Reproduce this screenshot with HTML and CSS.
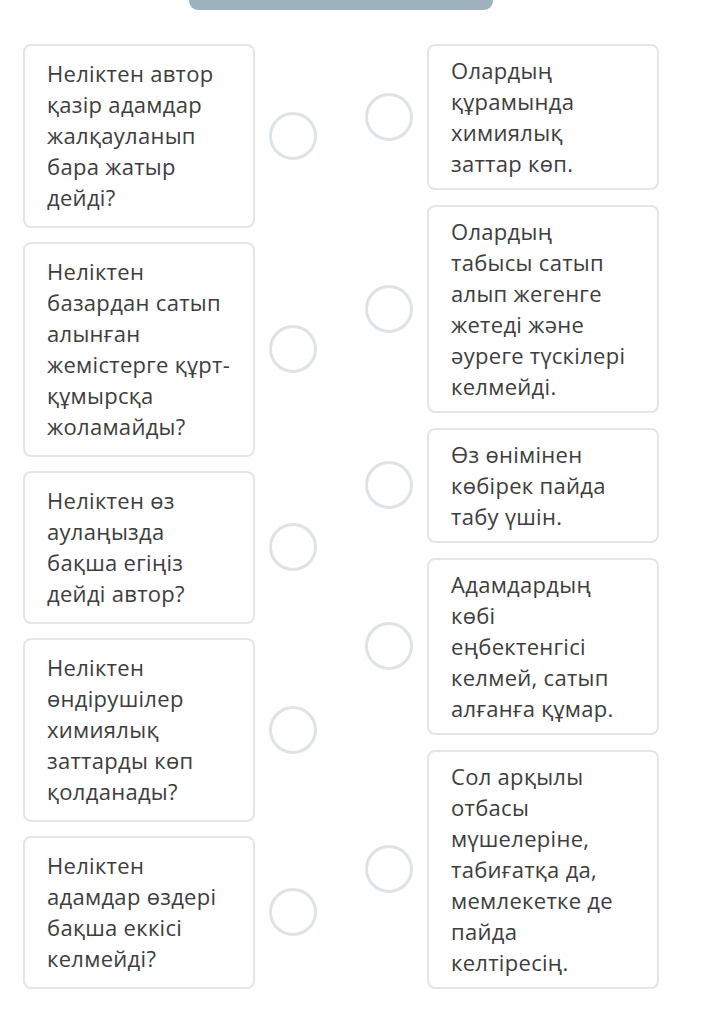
FILE: index.html
```html
<!DOCTYPE html>
<html lang="kk">
<head>
  <meta charset="UTF-8">
  <meta name="viewport" content="width=device-width, initial-scale=1.0">
  <title>Сәйкестендіру</title>
  <link rel="stylesheet" href="styles.css">
</head>
<body>
  <div class="topbar"></div>

  <div class="board">
    <div class="column left">
      <div class="row">
        <div class="card">Неліктен автор қазір адамдар жалқауланып бара жатыр дейді?</div>
        <span class="dot"></span>
      </div>
      <div class="row">
        <div class="card">Неліктен базардан сатып алынған жемістерге құрт-құмырсқа жоламайды?</div>
        <span class="dot"></span>
      </div>
      <div class="row">
        <div class="card">Неліктен өз аулаңызда бақша егіңіз дейді автор?</div>
        <span class="dot"></span>
      </div>
      <div class="row">
        <div class="card">Неліктен өндірушілер химиялық заттарды көп қолданады?</div>
        <span class="dot"></span>
      </div>
      <div class="row">
        <div class="card">Неліктен адамдар өздері бақша еккісі келмейді?</div>
        <span class="dot"></span>
      </div>
    </div>

    <div class="column right">
      <div class="row">
        <span class="dot"></span>
        <div class="card">Олардың құрамында химиялық заттар көп.</div>
      </div>
      <div class="row">
        <span class="dot"></span>
        <div class="card">Олардың табысы сатып алып жегенге жетеді және әуреге түскілері келмейді.</div>
      </div>
      <div class="row">
        <span class="dot"></span>
        <div class="card">Өз өнімінен көбірек пайда табу үшін.</div>
      </div>
      <div class="row">
        <span class="dot"></span>
        <div class="card">Адамдардың көбі еңбектенгісі келмей, сатып алғанға құмар.</div>
      </div>
      <div class="row">
        <span class="dot"></span>
        <div class="card">Сол арқылы отбасы мүшелеріне, табиғатқа да, мемлекетке де пайда келтіресің.</div>
      </div>
    </div>
  </div>
</body>
</html>
```

FILE: styles.css
```css
body {
  margin: 0;
  background: #fff;
  font-family: "Open Sans", "Noto Sans", Arial, sans-serif;
  color: #3d3d3d;
}
.topbar {
  width: 304px;
  height: 10px;
  margin-left: 189px;
  background: #9db2bd;
  border-radius: 0 0 9px 9px;
}
.board {
  display: flex;
  gap: 48px;
  margin: 34px 0 0 23px;
}
.column {
  display: flex;
  flex-direction: column;
  gap: 14.5px;
}
.right {
  gap: 15.5px;
}
.row {
  display: flex;
  align-items: center;
  gap: 14px;
}
.card {
  width: 232px;
  box-sizing: border-box;
  padding: 12px 22px 12.5px 22px;
  border: 2px solid #e3e6e8;
  border-radius: 8px;
  font-size: 22px;
  letter-spacing: 0.3px;
  line-height: 31px;
}
.right .card {
  padding-top: 9px;
  padding-bottom: 8.5px;
}
.dot {
  width: 48px;
  height: 48px;
  box-sizing: border-box;
  border: 3px solid #dde3e6;
  border-radius: 50%;
  flex: none;
}
```
